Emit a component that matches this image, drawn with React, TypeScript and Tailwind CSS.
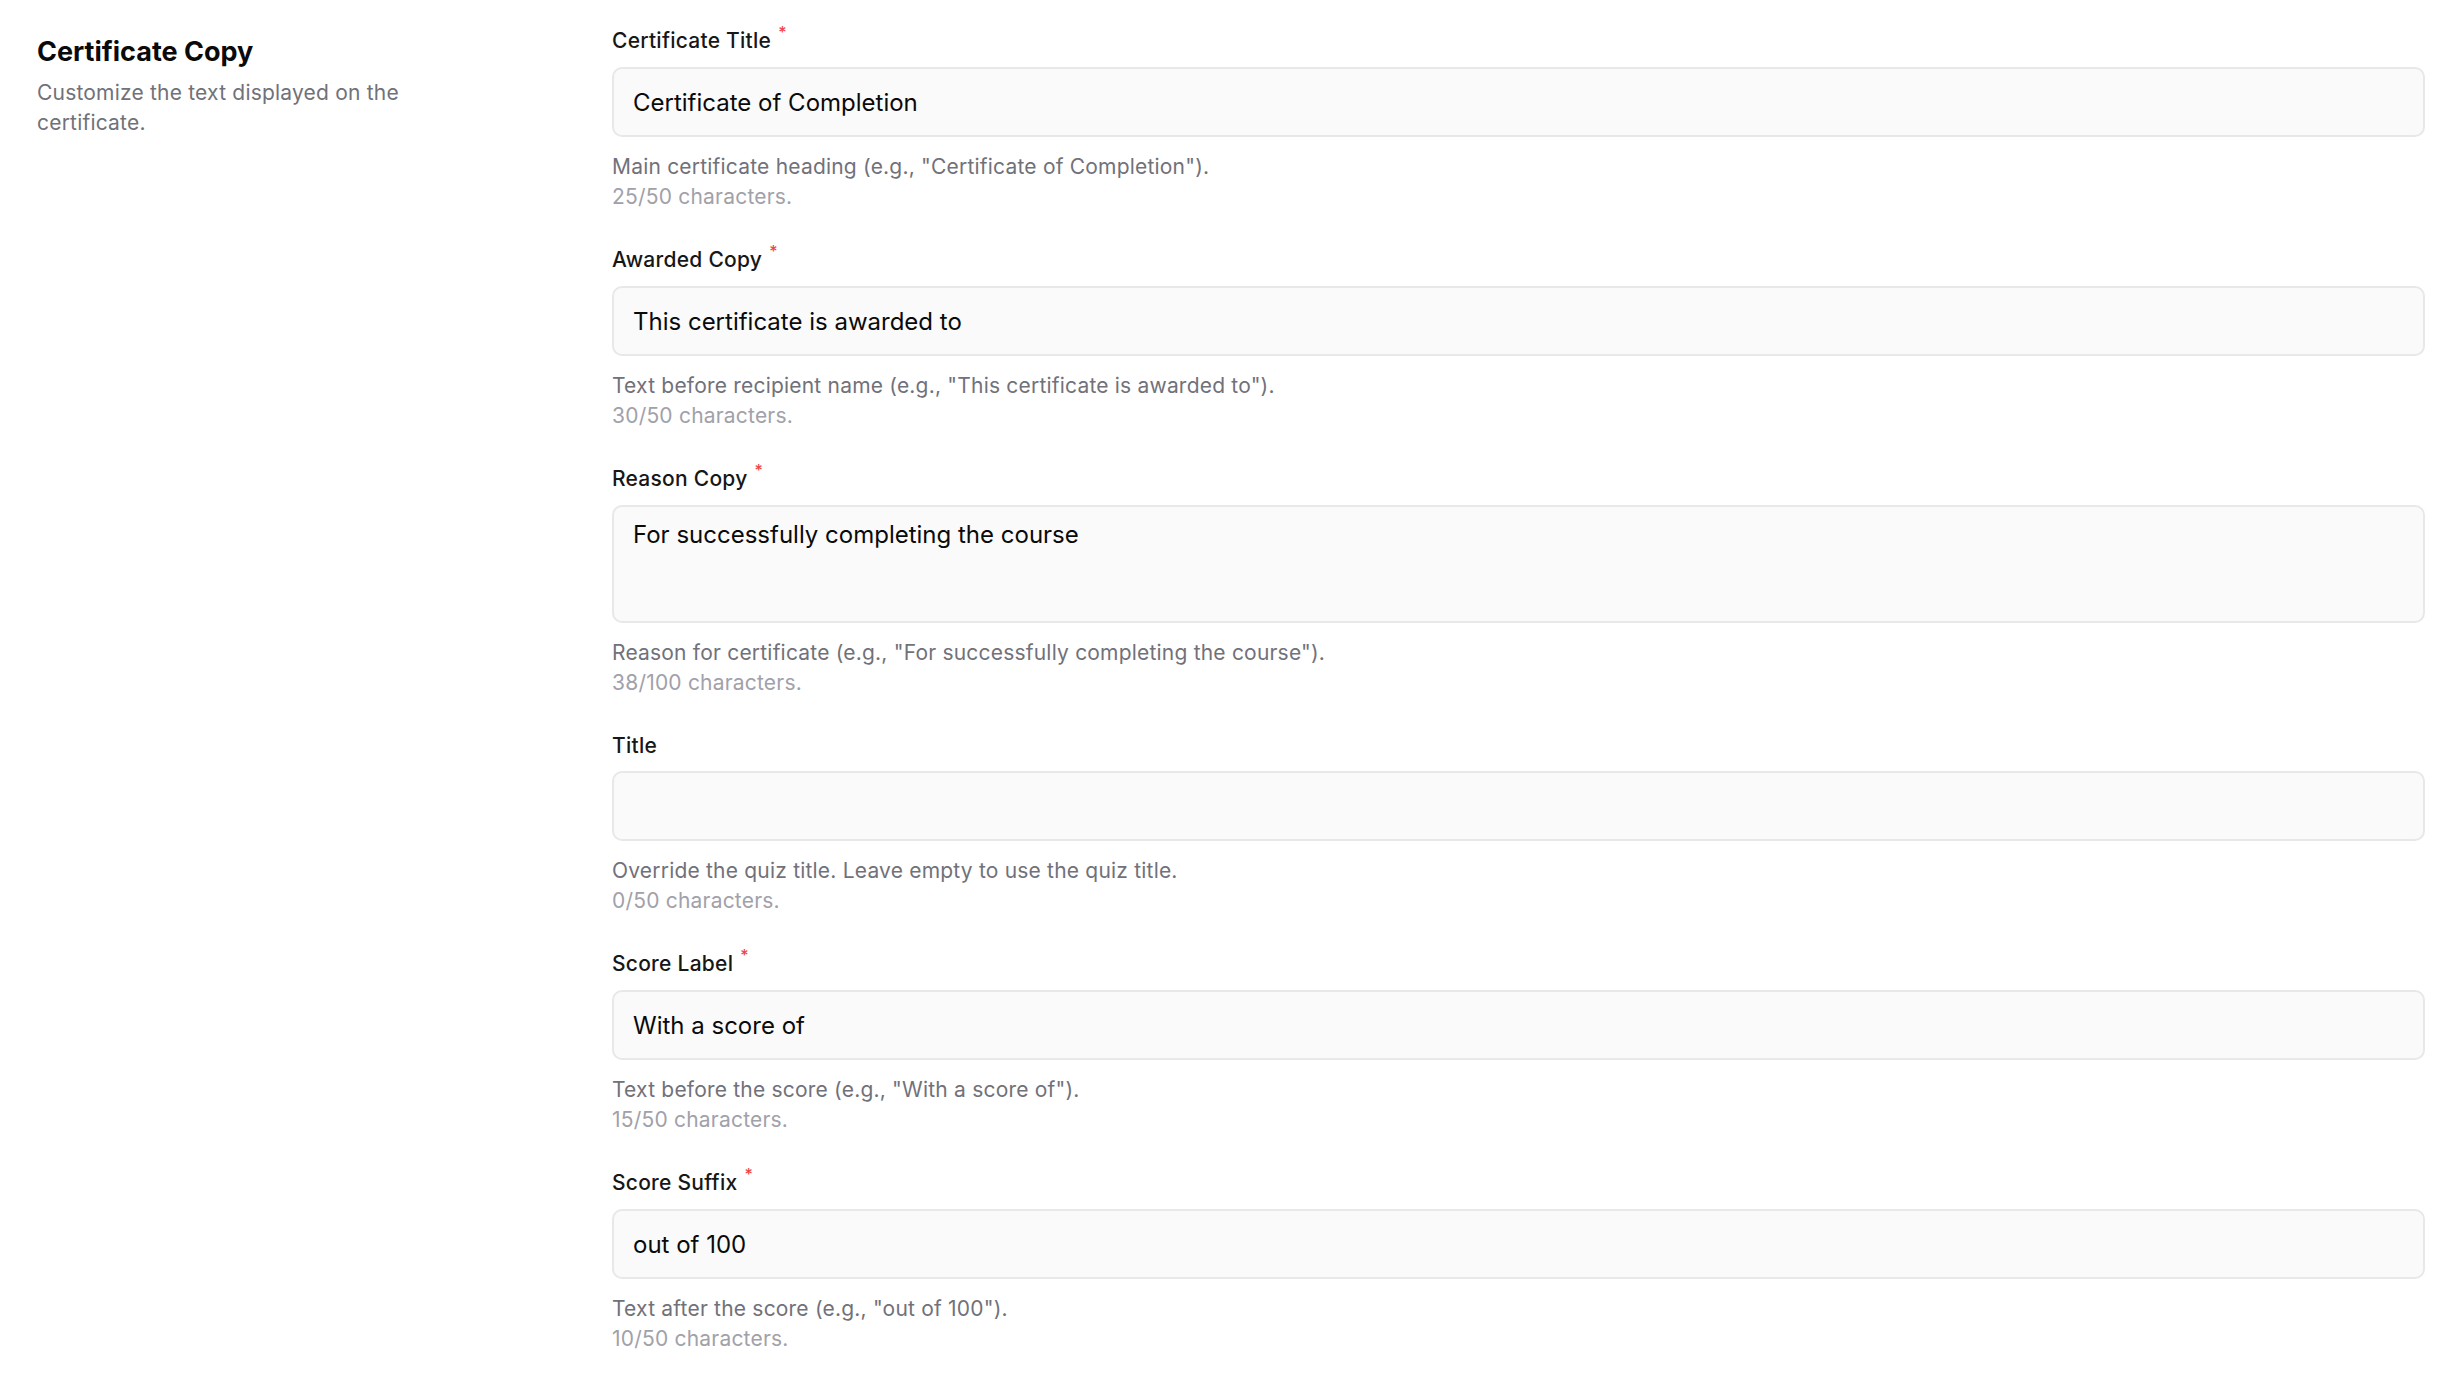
import React from "react";

type Field = {
  label: string;
  required?: boolean;
  value: string;
  help: string;
  max: number;
  multiline?: boolean;
};

const fields: Field[] = [
  {
    label: "Certificate Title",
    required: true,
    value: "Certificate of Completion",
    help: 'Main certificate heading (e.g., "Certificate of Completion").',
    max: 50,
  },
  {
    label: "Awarded Copy",
    required: true,
    value: "This certificate is awarded to",
    help: 'Text before recipient name (e.g., "This certificate is awarded to").',
    max: 50,
  },
  {
    label: "Reason Copy",
    required: true,
    value: "For successfully completing the course",
    help: 'Reason for certificate (e.g., "For successfully completing the course").',
    max: 100,
    multiline: true,
  },
  {
    label: "Title",
    value: "",
    help: "Override the quiz title. Leave empty to use the quiz title.",
    max: 50,
  },
  {
    label: "Score Label",
    required: true,
    value: "With a score of",
    help: 'Text before the score (e.g., "With a score of").',
    max: 50,
  },
  {
    label: "Score Suffix",
    required: true,
    value: "out of 100",
    help: 'Text after the score (e.g., "out of 100").',
    max: 50,
  },
];

function FormField({ field }: { field: Field }) {
  const inputClass =
    "w-full rounded-[10px] border-2 border-[#e8e8e8] bg-[#fafafa] px-[19px] text-[24px] text-[#0a0a0a] outline-none";

  return (
    <div className="flex flex-col">
      <label className="text-[21px] leading-[30px] font-medium tracking-[0.25px] text-[#171717]">
        {field.label}
        {field.required && (
          <span className="relative -top-[10px] ml-[7px] text-[16px] text-[#ef4444]">*</span>
        )}
      </label>
      <div className="mt-[10px]">
        {field.multiline ? (
          <textarea
            defaultValue={field.value}
            rows={2}
            className={inputClass + " block h-[118px] resize-none pt-[10px] leading-[36px]"}
          />
        ) : (
          <input
            type="text"
            defaultValue={field.value}
            className={inputClass + " block h-[70px]"}
          />
        )}
      </div>
      <p className="mt-[15px] text-[21px] leading-[30px] tracking-[0.2px] text-[#71717a]">
        {field.help}
      </p>
      <p className="text-[21px] leading-[30px] tracking-[0.2px] text-[#a1a1aa]">
        {field.value.length}/{field.max} characters.
      </p>
    </div>
  );
}

export default function App() {
  return (
    <div
      className="min-h-screen bg-white px-[37px] pt-[26px] pb-[24px]"
      style={{ fontFamily: "Inter, 'Noto Sans', sans-serif" }}
    >
      <div className="flex">
        {/* Section intro */}
        <div className="w-[575px] shrink-0 pt-[8px]">
          <h2 className="text-[27px] leading-[36px] font-bold text-[#0a0a0a]">
            Certificate Copy
          </h2>
          <p className="mt-[8px] max-w-[400px] text-[21px] leading-[30px] tracking-[0.2px] text-[#71717a]">
            Customize the text displayed on the certificate.
          </p>
        </div>

        {/* Fields */}
        <div className="flex flex-1 flex-col gap-[33px]">
          {fields.map((f) => (
            <FormField key={f.label} field={f} />
          ))}
        </div>
      </div>
    </div>
  );
}
